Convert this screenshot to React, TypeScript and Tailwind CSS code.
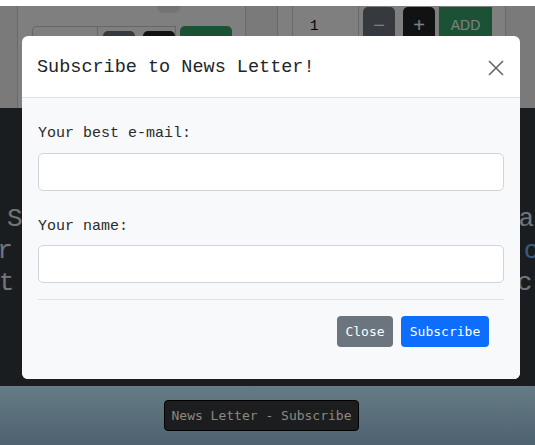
const ProductsRow = () => (
  <div className="flex h-[102px] shrink-0 bg-white">
    <div className="w-[18px] border-r border-[#d2d2d2] bg-[#f5f5f5]" />
    <div className="relative w-[227px] pl-[14px] pt-[20px]">
      <div className="absolute left-[139px] top-0 h-[7px] w-[23px] rounded-b-[6px] bg-[#e8e8e8]" />
      <div className="flex">
        <div className="h-[34px] w-[66px] rounded-l-[4px] border border-[#cfcfcf] bg-white" />
        <div className="flex h-[34px] w-[78px] gap-[8px] border border-l-0 border-[#cfcfcf] pl-[5px] pt-[4px]">
          <div className="h-[30px] w-[32px] rounded-[5px] bg-[#6c757d]" />
          <div className="h-[30px] w-[32px] rounded-[5px] bg-[#212529]" />
        </div>
        <div className="ml-[4px] h-[34px] w-[52px] rounded-[5px] bg-[#36a56a]" />
      </div>
    </div>
    <div className="w-[33px] border-x border-[#d2d2d2] bg-[#f5f5f5]" />
    <div className="flex w-[227px] items-start pl-[14px]">
      <div className="flex h-[40px] w-[67px] items-start border-x border-[#d2d2d2] pl-[17px] pt-[12px] text-[14px] leading-[16px] text-black">
        1
      </div>
      <div className="ml-[4px] mt-[1px] flex h-[36px] w-[32px] items-center justify-center rounded-[5px] bg-[#6c757d] font-['Liberation_Sans',sans-serif] text-[20px] text-white">
        −
      </div>
      <div className="ml-[8px] mt-[1px] flex h-[36px] w-[32px] items-center justify-center rounded-[5px] bg-[#212529] font-['Liberation_Sans',sans-serif] text-[20px] text-white">
        +
      </div>
      <div className="ml-[4px] mt-[1px] flex h-[36px] w-[53px] items-center justify-center bg-[#36a56a] font-['Liberation_Sans',sans-serif] text-[14px] text-white">
        ADD
      </div>
    </div>
    <div className="flex-1 border-l border-[#d2d2d2] bg-[#f5f5f5]" />
  </div>
);

// big hero copy, mostly hidden behind the modal
const Hero = () => (
  <div className="flex-1 overflow-hidden bg-[#343a40] pt-[95px] text-[26px] leading-[32px] text-[#e4eaf2]">
    <div className="flex justify-between whitespace-nowrap">
      <span className="ml-[7px]">Stay</span>
      <span className="mr-[1px]">a</span>
    </div>
    <div className="flex justify-between whitespace-nowrap">
      <span className="-ml-[34px]">our</span>
      <span className="-mr-[20px] text-[#7db3ff]">co</span>
    </div>
    <div className="flex justify-between whitespace-nowrap">
      <span className="-ml-[48px]">just</span>
      <span className="-mr-[13px]">ct</span>
    </div>
  </div>
);

const Modal = () => (
  <div className="absolute left-[22px] top-[36px] w-[498px] overflow-hidden rounded-[6px] bg-white">
    <div className="flex h-[62px] items-center justify-between border-b border-[#dee2e6] pl-[15px] pr-[16px] pt-[2px]">
      <h5 className="text-[18.5px] text-[#212529]">Subscribe to News Letter!</h5>
      <svg width="16" height="16" viewBox="0 0 16 16" className="text-[#666]">
        <path d="M1 1 L15 15 M15 1 L1 15" stroke="currentColor" strokeWidth="1.6" />
      </svg>
    </div>
    <div className="bg-[#f8f9fa] px-[16px] pb-[32px] pt-[25px] text-[#2b2b2b]">
      <label className="mb-[9px] block text-[15px] leading-[21px]">Your best e-mail:</label>
      <input type="email" className="block h-[38px] w-full rounded-[5px] border border-[#ced4da] bg-white" />
      <label className="mb-[8px] mt-[25px] block text-[15px] leading-[21px]">Your name:</label>
      <input type="text" className="block h-[38px] w-full rounded-[5px] border border-[#ced4da] bg-white" />
      <hr className="mt-[16px] border-[#dee2e6]" />
      <div className="mt-[16px] flex justify-end gap-[8px] pr-[15px] font-['DejaVu_Sans_Mono',monospace] text-[13px]">
        <button className="h-[31px] w-[56px] rounded-[4px] bg-[#6c757d] text-white">Close</button>
        <button className="h-[31px] w-[88px] rounded-[4px] bg-[#0d6efd] text-white">Subscribe</button>
      </div>
    </div>
  </div>
);

export default function App() {
  return (
    <div className="relative flex h-[445px] w-[535px] flex-col overflow-hidden bg-white font-['Liberation_Mono',monospace]">
      <div className="h-[6px] shrink-0 bg-white" />
      <div className="relative flex h-[380px] shrink-0 flex-col">
        <ProductsRow />
        <Hero />
        <div className="absolute inset-0 bg-black/50" />
      </div>
      <footer className="flex flex-1 items-center bg-gradient-to-b from-[#657b85] to-[#4e6370] pl-[164px]">
        <button className="h-[31px] w-[195px] rounded-[4px] border border-black bg-[#1c1d1f] font-['DejaVu_Sans_Mono',monospace] text-[13px] text-[#8d8a7f]">
          News Letter - Subscribe
        </button>
      </footer>
      <Modal />
    </div>
  );
}
